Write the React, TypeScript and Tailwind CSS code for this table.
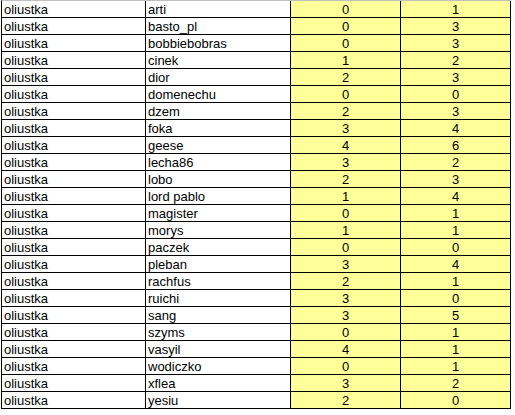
const rows: [string, number, number][] = [
  ["arti", 0, 1],
  ["basto_pl", 0, 3],
  ["bobbiebobras", 0, 3],
  ["cinek", 1, 2],
  ["dior", 2, 3],
  ["domenechu", 0, 0],
  ["dzem", 2, 3],
  ["foka", 3, 4],
  ["geese", 4, 6],
  ["lecha86", 3, 2],
  ["lobo", 2, 3],
  ["lord pablo", 1, 4],
  ["magister", 0, 1],
  ["morys", 1, 1],
  ["paczek", 0, 0],
  ["pleban", 3, 4],
  ["rachfus", 2, 1],
  ["ruichi", 3, 0],
  ["sang", 3, 5],
  ["szyms", 0, 1],
  ["vasyil", 4, 1],
  ["wodiczko", 0, 1],
  ["xflea", 3, 2],
  ["yesiu", 2, 0],
];

const cell =
  "h-[17px] border-r border-b border-black flex items-end pb-[1px] leading-none";

export default function App() {
  return (
    <div className="w-[515px] h-[415px] bg-white pl-[1px] text-[13px] text-black font-['Liberation_Sans',Arial,sans-serif]">
      <div className="grid grid-cols-[144px_145px_110px_110px] w-[510px] border-l border-t border-l-black border-t-[#c0c0c0]">
        {rows.map(([name, a, b], i) => (
          <div key={i} className="contents">
            <div className={`${cell} pl-[2px]`}>oliustka</div>
            <div className={`${cell} pl-[2px]`}>{name}</div>
            <div className={`${cell} justify-center bg-[#ffff99]`}>{a}</div>
            <div className={`${cell} justify-center bg-[#ffff99]`}>{b}</div>
          </div>
        ))}
      </div>
    </div>
  );
}
